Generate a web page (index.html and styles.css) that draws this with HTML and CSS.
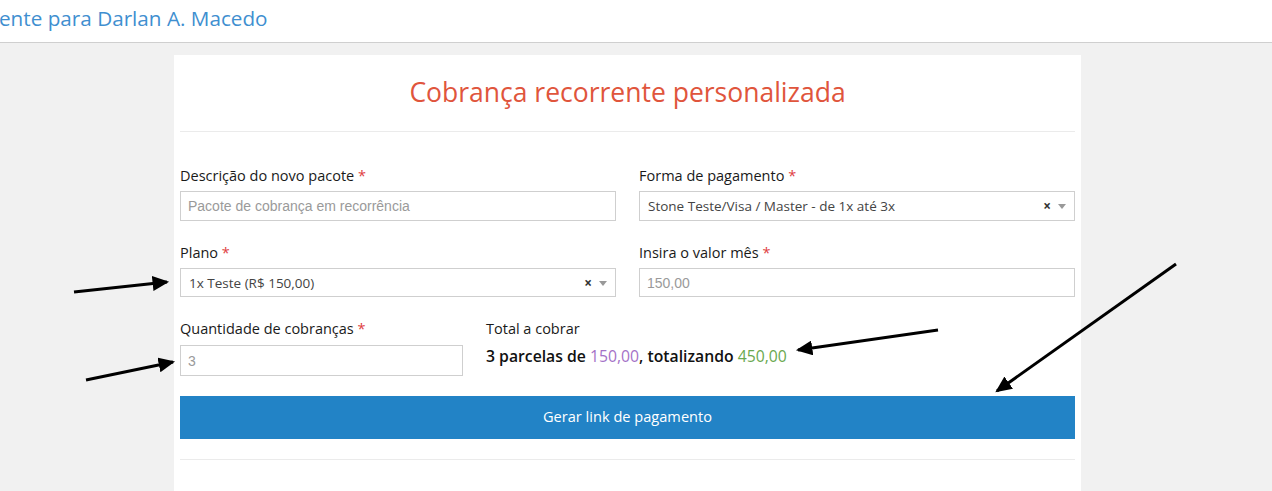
FILE: index.html
```html
<!DOCTYPE html>
<html lang="pt-BR">
<head>
<meta charset="utf-8">
<title>Cobrança recorrente personalizada</title>
<link rel="stylesheet" href="styles.css">
</head>
<body>
<header class="topbar">
  <h1 class="topbar-title">ente para Darlan A. Macedo</h1>
</header>
<main class="page">
  <section class="card">
    <h2 class="card-title">Cobrança recorrente personalizada</h2>
    <hr class="divider">
    <form class="form">
      <div class="row two">
        <div class="field">
          <label class="label">Descrição do novo pacote <span class="req">*</span></label>
          <input class="input" type="text" placeholder="Pacote de cobrança em recorrência">
        </div>
        <div class="field">
          <label class="label">Forma de pagamento <span class="req">*</span></label>
          <div class="select">
            <span class="select-value">Stone Teste/Visa / Master - de 1x até 3x</span>
            <span class="select-clear">×</span>
            <span class="select-arrow"></span>
          </div>
        </div>
      </div>
      <div class="row two">
        <div class="field">
          <label class="label">Plano <span class="req">*</span></label>
          <div class="select select-sm">
            <span class="select-value">1x Teste (R$ 150,00)</span>
            <span class="select-clear">×</span>
            <span class="select-arrow"></span>
          </div>
        </div>
        <div class="field">
          <label class="label">Insira o valor mês <span class="req">*</span></label>
          <input class="input input-sm" type="text" placeholder="150,00">
        </div>
      </div>
      <div class="row three">
        <div class="field">
          <label class="label">Quantidade de cobranças <span class="req">*</span></label>
          <input class="input input-lg" type="text" placeholder="3">
        </div>
        <div class="summary">
          <div class="summary-label">Total a cobrar</div>
          <div class="summary-text">3 parcelas de <span class="purple">150,00</span>, totalizando <span class="green">450,00</span></div>
        </div>
      </div>
      <button type="button" class="btn">Gerar link de pagamento</button>
    </form>
    <hr class="divider divider-bottom">
  </section>
</main>
<svg class="notes" width="1272" height="491" viewBox="0 0 1272 491">
  <defs>
    <marker id="head" markerWidth="5.5" markerHeight="5" refX="4.8" refY="2.5" orient="auto" markerUnits="strokeWidth">
      <path d="M0,0 L5.5,2.5 L0,5 Z" fill="#000"/>
    </marker>
  </defs>
  <g stroke="#000" stroke-width="3" fill="none" marker-end="url(#head)">
    <line x1="74" y1="292" x2="167" y2="282"/>
    <line x1="86" y1="380" x2="173" y2="362"/>
    <line x1="938" y1="330" x2="798" y2="350"/>
    <line x1="1176" y1="264" x2="997" y2="391"/>
  </g>
</svg>
</body>
</html>
```
FILE: styles.css
```css
* { box-sizing: border-box; }

html, body {
  margin: 0;
  padding: 0;
}

body {
  font-family: "Open Sans", "Liberation Sans", sans-serif;
  background: #f1f1f1;
  color: #222;
  height: 491px;
  overflow: hidden;
  position: relative;
}

.topbar {
  background: #fff;
  height: 43px;
  border-bottom: 1px solid #cfcfcf;
}

.topbar-title {
  margin: 0 0 0 -1px;
  font-weight: 400;
  font-size: 20.7px;
  line-height: 36px;
  color: #3f8fd0;
}

.page {
  padding-top: 12px;
  padding-left: 174px;
}

.card {
  width: 907px;
  background: #fff;
  padding: 0 6px;
  height: 460px;
}

.card-title {
  margin: 0;
  padding-top: 17px;
  text-align: center;
  font-weight: 400;
  font-size: 26.5px;
  line-height: 40px;
  color: #e0553c;
}

.divider {
  border: 0;
  border-top: 1px solid #ebebeb;
  margin: 19px 0 0;
}

.form {
  padding-top: 34px;
}

.row {
  display: grid;
  column-gap: 23px;
  margin-bottom: 22px;
}
.row.two { grid-template-columns: 1fr 1fr; }
.row.three { grid-template-columns: 283px 1fr; margin-bottom: 20px; }

.field {
  display: flex;
  flex-direction: column;
}

.label {
  font-size: 14.5px;
  line-height: 20px;
  color: #1a1a1a;
  margin-bottom: 5px;
}

.req { color: #e0403f; }

.input {
  height: 30px;
  border: 1px solid #cfcfcf;
  padding: 0 7px;
  font-family: "Liberation Sans", Arial, sans-serif;
  font-size: 14px;
  color: #555;
  background: #fff;
  outline: none;
}
.input::placeholder { color: #9a9a9a; }
.input-sm { height: 29px; }
.input-lg { height: 31px; margin-top: 1px; }

.select {
  height: 30px;
  border: 1px solid #cfcfcf;
  display: flex;
  align-items: center;
  padding: 0 8px;
  font-size: 13.5px;
  color: #444;
  background: #fff;
}
.select-sm { height: 29px; }

.select-value { flex: 1; }

.select-clear {
  font-weight: 700;
  font-size: 13.5px;
  color: #333;
  margin-right: 7px;
}

.select-arrow {
  width: 0;
  height: 0;
  border-left: 4px solid transparent;
  border-right: 4px solid transparent;
  border-top: 5px solid #999;
  margin-top: 1px;
}

.summary-label {
  font-size: 14.5px;
  line-height: 20px;
  color: #1a1a1a;
  margin-bottom: 5px;
}

.summary-text {
  font-size: 15.75px;
  font-weight: 600;
  line-height: 24px;
  color: #111;
}
.purple { color: #a472c7; font-weight: 400; }
.green { color: #6aa84f; font-weight: 400; }

.btn {
  display: block;
  width: 100%;
  height: 43px;
  padding: 0 0 3px;
  border: 0;
  background: #2283c6;
  color: #fff;
  font-family: "Open Sans", "Liberation Sans", sans-serif;
  font-size: 14.6px;
}

.divider-bottom {
  margin-top: 20px;
}

.notes {
  position: absolute;
  left: 0;
  top: 0;
  pointer-events: none;
}
```
